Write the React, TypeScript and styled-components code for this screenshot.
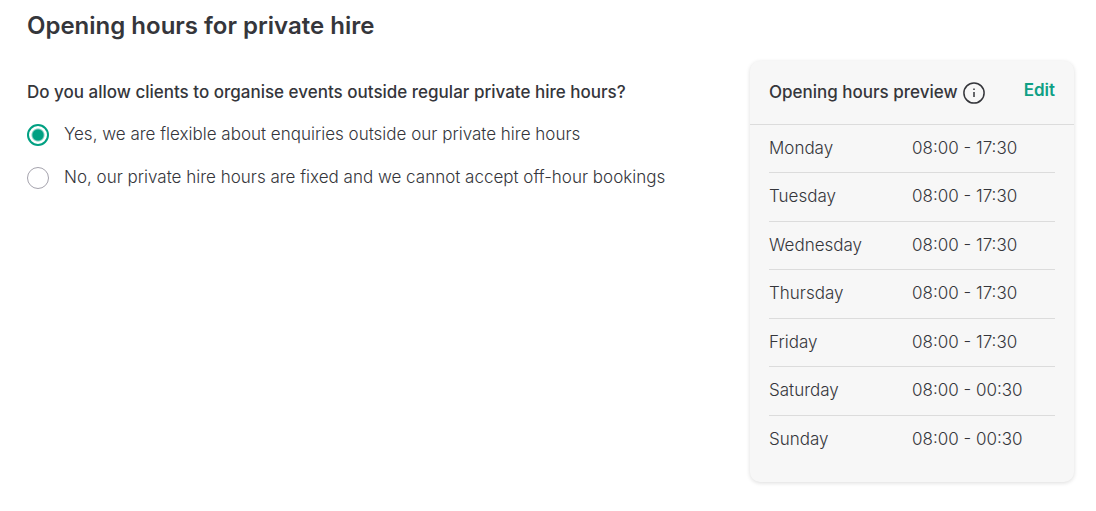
import React from "react";
import styled, { createGlobalStyle } from "styled-components";

const GlobalStyle = createGlobalStyle`
  *, *::before, *::after { box-sizing: border-box; }
  body {
    margin: 0;
    background: #fff;
    color: #35363b;
    font-family: Inter, "Liberation Sans", sans-serif;
    font-size: 17px;
    font-weight: 300;
  }
`;

const Page = styled.main`
  padding: 10px 22px 28px 27px;
`;

const Title = styled.h1`
  margin: 0;
  font-size: 24px;
  line-height: 32px;
  font-weight: 600;
`;

const Columns = styled.div`
  display: grid;
  grid-template-columns: minmax(0, 1fr) 324px;
  gap: 32px;
  align-items: start;
  margin-top: 19px;
`;

const Question = styled.fieldset`
  margin: 0;
  padding: 19px 0 0;
  border: 0;
  min-width: 0;
`;

const Legend = styled.legend`
  float: left;
  width: 100%;
  padding: 0;
  margin-bottom: 18px;
  font-weight: 500;
  line-height: 24px;
`;

const Option = styled.label`
  clear: both;
  display: flex;
  align-items: center;
  gap: 15px;
  margin-bottom: 17px;
  line-height: 24px;
  cursor: pointer;
`;

const OptionText = styled.span`
  padding-bottom: 2px;
`;

const Radio = styled.input`
  appearance: none;
  flex: none;
  width: 22px;
  height: 22px;
  margin: 0;
  border: 1px solid #a5a3ad;
  border-radius: 50%;
  background: #fff;

  &:checked {
    border: 2px solid #00a082;
    background: radial-gradient(circle, #00a082 5px, #fff 7px);
  }
`;

const Card = styled.section`
  border-radius: 10px;
  background: #f7f7f7;
  box-shadow: 0 1px 4px rgba(0, 0, 0, 0.14);
`;

const CardHeader = styled.header`
  display: flex;
  justify-content: space-between;
  padding: 17px 19px 18px;
  border-bottom: 1px solid #dcdcdc;
`;

const CardTitle = styled.h2`
  display: flex;
  align-items: center;
  gap: 4px;
  height: 28px;
  margin: 0;
  font-size: 17px;
  font-weight: 500;
`;

const EditButton = styled.button`
  height: 24px;
  padding: 0;
  border: 0;
  background: none;
  color: #0fa085;
  font: inherit;
  font-weight: 600;
  cursor: pointer;
`;

const CardBody = styled.div`
  padding: 0 19px 18px;
`;

const Hours = styled.table`
  width: 100%;
  border-collapse: separate;
  border-spacing: 0;
  table-layout: fixed;

  tr { height: 48px; }
  tr:nth-child(even) { height: 49px; }
  tr:not(:last-child) > * { border-bottom: 1px solid #dcdcdc; }
`;

const Day = styled.th`
  width: 50%;
  padding: 0 0 2px;
  text-align: left;
  font-weight: 300;
`;

const Time = styled.td`
  padding: 0 0 2px;
`;

const week = [
  ["Monday", "08:00 - 17:30"],
  ["Tuesday", "08:00 - 17:30"],
  ["Wednesday", "08:00 - 17:30"],
  ["Thursday", "08:00 - 17:30"],
  ["Friday", "08:00 - 17:30"],
  ["Saturday", "08:00 - 00:30"],
  ["Sunday", "08:00 - 00:30"],
];

function InfoIcon() {
  return (
    <svg width="24" height="24" viewBox="0 0 24 24" fill="none" stroke="currentColor" aria-hidden="true">
      <circle cx="12" cy="13" r="10.1" strokeWidth="1.5" />
      <path d="M12 12v5" strokeWidth="1.5" />
      <path d="M12 8.5v1.5" strokeWidth="1.5" />
    </svg>
  );
}

export default function App() {
  return (
    <Page>
      <GlobalStyle />
      <Title>Opening hours for private hire</Title>
      <Columns>
        <Question>
          <Legend>Do you allow clients to organise events outside regular private hire hours?</Legend>
          <Option>
            <Radio type="radio" name="flexibility" value="flexible" defaultChecked />
            <OptionText>Yes, we are flexible about enquiries outside our private hire hours</OptionText>
          </Option>
          <Option>
            <Radio type="radio" name="flexibility" value="fixed" />
            <OptionText>No, our private hire hours are fixed and we cannot accept off-hour bookings</OptionText>
          </Option>
        </Question>
        <Card>
          <CardHeader>
            <CardTitle>Opening hours preview <InfoIcon /></CardTitle>
            <EditButton type="button">Edit</EditButton>
          </CardHeader>
          <CardBody>
            <Hours>
              <tbody>
                {week.map(([day, time]) => (
                  <tr key={day}>
                    <Day scope="row">{day}</Day>
                    <Time>{time}</Time>
                  </tr>
                ))}
              </tbody>
            </Hours>
          </CardBody>
        </Card>
      </Columns>
    </Page>
  );
}
